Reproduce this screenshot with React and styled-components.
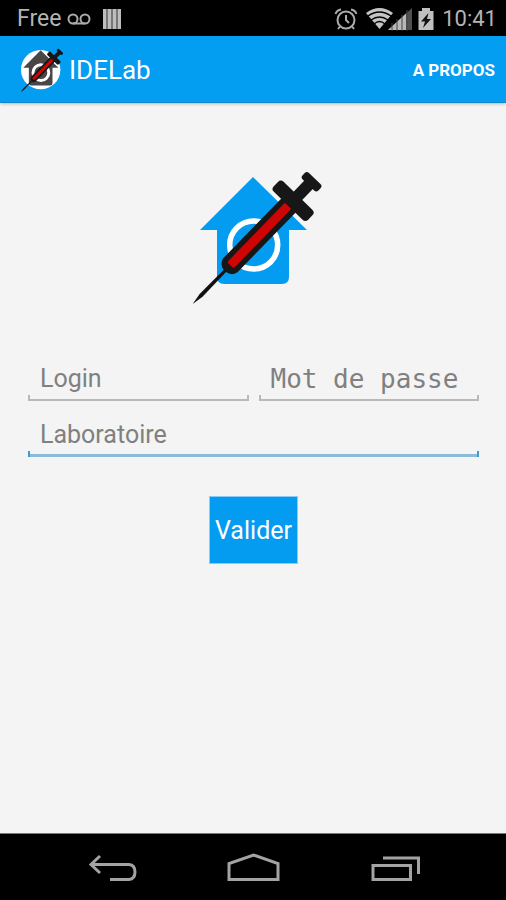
import React, { useState } from "react";
import styled, { createGlobalStyle } from "styled-components";

const App = () => {
  const [login, setLogin] = useState("");
  const [password, setPassword] = useState("");
  const [lab, setLab] = useState("");

  const handleSubmit = (event) => {
    event.preventDefault();
  };

  return (
    <Screen>
      <GlobalStyle />
      <StatusBar>
        <StatusGroup>
          <Carrier>Free</Carrier>
          <VoicemailIcon />
          <BarsIcon />
        </StatusGroup>
        <StatusGroup>
          <AlarmIcon />
          <NetworkIcon />
          <BatteryIcon />
          <Clock>10:41</Clock>
        </StatusGroup>
      </StatusBar>
      <Header>
        <Brand>
          <Logo size={44} color="#4a4648" badge />
          <Title>IDELab</Title>
        </Brand>
        <AboutButton type="button">A PROPOS</AboutButton>
      </Header>
      <Main>
        <Logo size={134} color="#049cf0" />
        <Form onSubmit={handleSubmit}>
          <Row>
            <Field
              type="text"
              aria-label="Login"
              placeholder="Login"
              value={login}
              onChange={(event) => setLogin(event.target.value)}
            />
            <PasswordField
              type="password"
              aria-label="Mot de passe"
              placeholder="Mot de passe"
              value={password}
              onChange={(event) => setPassword(event.target.value)}
            />
          </Row>
          <Field
            type="text"
            aria-label="Laboratoire"
            placeholder="Laboratoire"
            $active
            value={lab}
            onChange={(event) => setLab(event.target.value)}
          />
          <SubmitButton type="submit">Valider</SubmitButton>
        </Form>
      </Main>
      <NavBar>
        <NavButton type="button" aria-label="Retour">
          <svg width="56" height="32" fill="none" stroke="#a3a3a3">
            <path d="M15 5 L6 13.500 L15 22" strokeWidth="3" />
            <path d="M6 13.500 H44 Q50 14 50 21 Q50 28 44 28.500 H25" strokeWidth="3" />
          </svg>
        </NavButton>
        <NavButton type="button" aria-label="Accueil">
          <svg width="56" height="32" fill="none" stroke="#a3a3a3">
            <path d="M4 28.500 V12.500 L28.500 4 L53 12.500 V28.500 Z" strokeWidth="3" />
          </svg>
        </NavButton>
        <NavButton type="button" aria-label="Applications">
          <svg width="56" height="32" fill="none" stroke="#a3a3a3">
            <path d="M8 14.500 H45.500 V28.500 H8 Z" strokeWidth="3" />
            <path d="M18 7 H53.500 V23" strokeWidth="3" />
          </svg>
        </NavButton>
      </NavBar>
    </Screen>
  );
};

const Logo = ({ size, color, badge }) => (
  <LogoSvg width={size} height={size} viewBox="-3 0 134 134" aria-hidden="true">
    {badge && <circle cx="63" cy="66" r="60" fill="#fff" />}
    <path
      d="M63 7 L117 60 H99 V107 Q99 114 92 114 H34 Q27 114 27 107 V60 H10 Z"
      fill={color}
    />
    <circle
      cx="63.700"
      cy="75"
      r="24"
      fill="none"
      stroke="#fff"
      strokeWidth={badge ? 9 : 5.5}
    />
    {/* syringe, drawn along the x axis from the needle tip */}
    <g transform="translate(2.7 134) rotate(-45.8)">
      <path d="M0 0 L12 -2 L50 -1.500 V1.500 L12 2 Z" fill="#111" />
      <path
        d="M54 -10 H142 V10 H54 Q46 8 46 0 Q46 -8 54 -10 Z"
        fill="#171717"
      />
      <rect x="54" y="-4.500" width="83" height="9" rx="2" fill="#cf0505" />
      <rect x="137" y="-24" width="14" height="48" rx="4" fill="#171717" />
      <rect x="146" y="-6" width="26" height="12" fill="#171717" />
      <rect x="166" y="-11" width="9" height="22" rx="3" fill="#171717" />
    </g>
  </LogoSvg>
);

const VoicemailIcon = () => (
  <svg width="24" height="14" fill="none" stroke="#ababab" strokeWidth="2">
    <circle cx="6" cy="7" r="4.500" />
    <circle cx="18" cy="7" r="4.500" />
    <path d="M6 11.500 H18" />
  </svg>
);

const BarsIcon = () => (
  <BarsSvg width="18" height="20">
    <rect width="18" height="20" fill="#777" />
    <path d="M0 0h3v20h-3z M5 0h3v20h-3z M10 0h3v20h-3z M15 0h3v20h-3z" fill="#bdbdbd" />
  </BarsSvg>
);

const AlarmIcon = () => (
  <svg width="24" height="24" fill="none" stroke="#ababab" strokeWidth="2">
    <circle cx="12" cy="13" r="8.500" />
    <path d="M12 8 V13 L15 16 M1.500 7 Q3 3 7 2.500 M22.500 7 Q21 3 17 2.500 M6 19.500 L4 22 M18 19.500 L20 22" />
  </svg>
);

const NetworkIcon = () => (
  <NetworkSvg width="46" height="24">
    <path d="M0 6 Q13.500 -4 27 6 L13.500 22 Z" fill="#c4c4c4" />
    <path
      d="M2 9 Q13.500 1 25 9 M5 13 Q13.500 7 22 13 M8 17 Q13.500 12 19 17"
      fill="none"
      stroke="#000"
      strokeWidth="1.300"
    />
    <path d="M22 23 L46 1 V23 Z" fill="#505050" />
    <path d="M22 23 L40 6.500 V23 Z" fill="#b8b8b8" />
    <path
      d="M26 16V24 M31 12V24 M36 8V24 M41 3V24"
      stroke="#444"
      strokeWidth="1"
    />
  </NetworkSvg>
);

const BatteryIcon = () => (
  <svg width="16" height="24">
    <path d="M4 1 H12 V4 H15.500 V23 H0.500 V4 H4 Z" fill="#c0c0c0" />
    <path d="M10.500 6 L3 14.500 H7 L5 21 L13 12 H9 Z" fill="#111" />
  </svg>
);

const GlobalStyle = createGlobalStyle`
  * {
    box-sizing: border-box;
  }
  body {
    margin: 0;
    font-family: Roboto, "Noto Sans", sans-serif;
    background: #f4f4f4;
  }
  svg {
    display: block;
    flex: none;
    overflow: visible;
  }
`;

const Screen = styled.div`
  display: flex;
  flex-direction: column;
  min-height: 100vh;
`;

const StatusBar = styled.div`
  display: flex;
  justify-content: space-between;
  align-items: center;
  height: 36px;
  padding: 1px 9px 0 17px;
  background: #000;
  color: #b4b4b4;
`;
const StatusGroup = styled.div`
  display: flex;
  align-items: center;
`;
const Carrier = styled.span`
  margin-right: 6px;
  padding-top: 1px;
  font-size: 23px;
  line-height: 34px;
`;
const Clock = styled.span`
  margin-left: 8px;
  padding-top: 1px;
  font-size: 22px;
  line-height: 34px;
`;
const BarsSvg = styled.svg`
  margin-left: 12px;
`;
const NetworkSvg = styled.svg`
  margin: 0 6px 0 8px;
`;
const LogoSvg = styled.svg``;

const Header = styled.header`
  display: flex;
  justify-content: space-between;
  align-items: center;
  height: 67px;
  padding: 2px 11px 0 19px;
  background: #039df2;
  border-bottom: 1px solid #1088cc;
  box-shadow: 0 1px 3px rgba(0, 0, 0, 0.25);
  color: #fff;
`;
const Brand = styled.div`
  display: flex;
  align-items: center;
  gap: 6px;
`;
const Title = styled.h1`
  margin: 0;
  font-size: 26px;
  font-weight: 400;
`;
const AboutButton = styled.button`
  padding: 0;
  border: 0;
  background: none;
  color: #fff;
  font: 700 17px Roboto, sans-serif;
`;

const Main = styled.main`
  display: flex;
  flex: 1;
  flex-direction: column;
  align-items: center;
  padding: 67px 27px 24px 28px;
`;
const Form = styled.form`
  display: flex;
  flex-direction: column;
  align-items: center;
  width: 100%;
  margin-top: 53px;
`;
const Row = styled.div`
  display: flex;
  gap: 10px;
  width: 100%;
  margin-bottom: 12px;
`;

// underline with a short upright tick at each end
const Field = styled.input`
  --line: ${({ $active }) => ($active ? "#8abbd9" : "#b9b9b9")};
  --tick: ${({ $active }) => ($active ? "#3d9bd0" : "#b9b9b9")};
  flex: 1;
  width: 100%;
  min-width: 0;
  height: 44px;
  padding: 0 12px;
  border: 0;
  border-radius: 0;
  outline: 0;
  background:
    linear-gradient(var(--tick), var(--tick)) left bottom / 2px 6px no-repeat,
    linear-gradient(var(--tick), var(--tick)) right bottom / 2px 6px no-repeat,
    linear-gradient(var(--line), var(--line)) left bottom /
      100% ${({ $active }) => ($active ? "3px" : "2px")} no-repeat;
  color: #333;
  font-family: Roboto, sans-serif;
  font-size: 25px;
  line-height: 44px;

  &::placeholder {
    color: #808080;
    opacity: 1;
  }
`;
const PasswordField = styled(Field)`
  font-family: "DejaVu Sans Mono", monospace;
  font-size: 26px;
`;

const SubmitButton = styled.button`
  height: 68px;
  margin-top: 39px;
  padding: 0 5px;
  border: 1px solid #8ccaf5;
  background: #049cf0;
  color: #fff;
  font: 400 25px Roboto, sans-serif;
`;

const NavBar = styled.nav`
  display: flex;
  height: 67px;
  padding: 0 43px;
  border-top: 1px solid #777;
  background: #000;
`;
const NavButton = styled.button`
  display: flex;
  flex: 1;
  justify-content: center;
  align-items: center;
  padding: 0;
  border: 0;
  background: none;
`;

export default App;
